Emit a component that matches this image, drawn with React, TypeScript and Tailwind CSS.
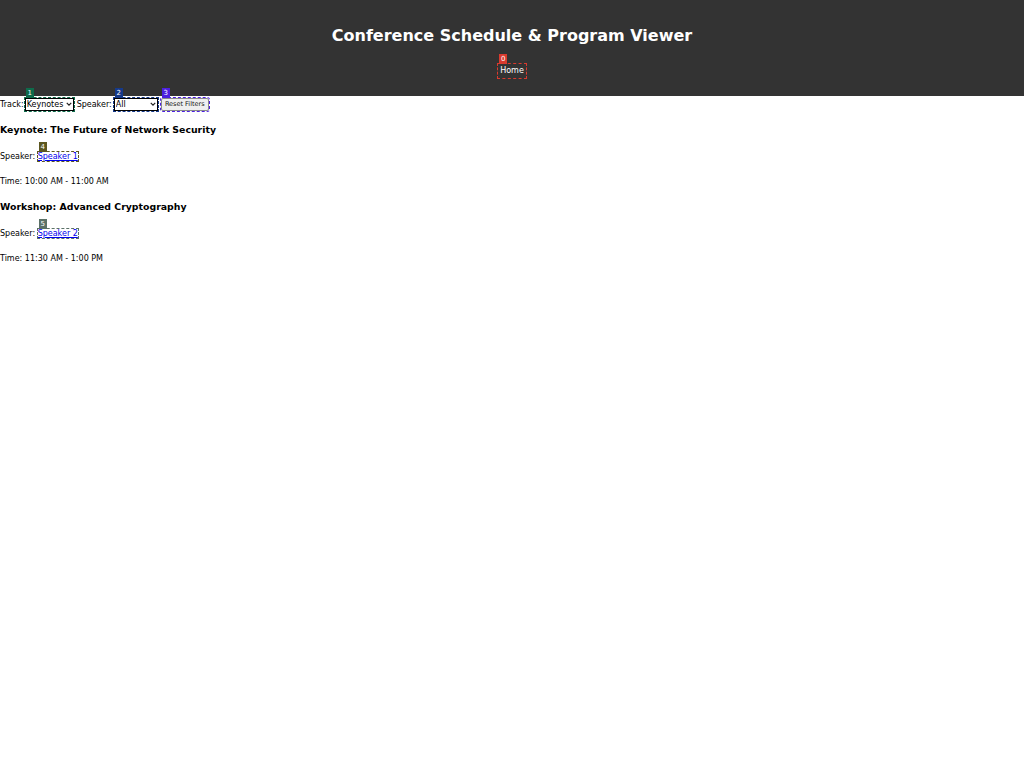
import React from 'react';

const font = { fontFamily: '"DejaVu Sans", sans-serif' };

function Badge({ n, color }: { n: number; color: string }) {
  return (
    <span
      className={`absolute -top-[10px] left-[1px] z-10 flex h-[10px] w-[8px] items-center justify-center text-[7px] leading-none text-white ${color}`}
    >
      {n}
    </span>
  );
}

function Chevron() {
  return (
    <svg
      viewBox="0 0 8 8"
      className="pointer-events-none absolute right-[2px] top-[3px] h-[6px] w-[6px]"
      fill="none"
      stroke="#222"
      strokeWidth="1.6"
    >
      <path d="M1 2.5 L4 5.5 L7 2.5" />
    </svg>
  );
}

const sessions = [
  {
    title: 'Keynote: The Future of Network Security',
    speaker: 'Speaker 1',
    time: '10:00 AM - 11:00 AM',
    badge: 4,
    color: 'bg-[#5c5720]',
    outline: 'outline-[#5c5720]',
    top: 'mt-[13px]',
  },
  {
    title: 'Workshop: Advanced Cryptography',
    speaker: 'Speaker 2',
    time: '11:30 AM - 1:00 PM',
    badge: 5,
    color: 'bg-[#5b7167]',
    outline: 'outline-[#5b7167]',
    top: 'mt-[13px]',
  },
];

export default function App() {
  return (
    <div className="min-h-screen bg-white text-black" style={font}>
      <header className="flex h-[96px] flex-col items-center bg-[#333333] pt-[26px] text-white">
        <h1 className="text-[16px] font-bold leading-[20px]">Conference Schedule &amp; Program Viewer</h1>
        <nav className="mt-[10px]">
          <a
            href="#"
            className="relative inline-block px-[2px] py-[2px] text-[8px] leading-[10px] text-white outline-dashed outline-1 outline-[#d93a2e]"
          >
            <Badge n={0} color="bg-[#d93a2e]" />
            Home
          </a>
        </nav>
      </header>

      <div className="flex h-[15px] items-end text-[8px]">
        <span className="leading-[13px]">Track:</span>
        <span className="relative ml-[1px]">
          <Badge n={1} color="bg-[#0f6b4b]" />
          <select className="block h-[13px] w-[49px] appearance-none border border-black bg-white pl-[1px] text-[8px] leading-[11px] outline-dashed outline-1 outline-[#0f6b4b]">
            <option>Keynotes</option>
          </select>
          <Chevron />
        </span>
        <span className="ml-[3px] leading-[13px]">Speaker:</span>
        <span className="relative ml-[2px]">
          <Badge n={2} color="bg-[#15398a]" />
          <select className="block h-[13px] w-[44px] appearance-none border border-black bg-white pl-[1px] text-[8px] leading-[11px] outline-dashed outline-1 outline-[#15398a]">
            <option>All</option>
          </select>
          <Chevron />
        </span>
        <span className="relative ml-[3px]">
          <Badge n={3} color="bg-[#4c1fe0]" />
          <button className="block h-[13px] w-[48px] rounded-[2px] border border-[#8a8a8a] bg-[#efefef] text-[6.5px] leading-[11px] text-[#111] outline-dashed outline-1 outline-[#4c1fe0]">
            Reset Filters
          </button>
        </span>
      </div>

      {sessions.map((s) => (
        <div key={s.badge} className={s.top}>
          <h3 className="text-[9.36px] font-bold leading-[12px]">{s.title}</h3>
          <p className="mt-[15px] text-[8px] leading-[12px]">
            Speaker:{' '}
            <a
              href="#"
              className={`relative text-[#0000ee] underline outline-dashed outline-1 ${s.outline}`}
            >
              <Badge n={s.badge} color={s.color} />
              {s.speaker}
            </a>
          </p>
          <p className="mt-[13px] text-[8px] leading-[12px]">Time: {s.time}</p>
        </div>
      ))}
    </div>
  );
}
